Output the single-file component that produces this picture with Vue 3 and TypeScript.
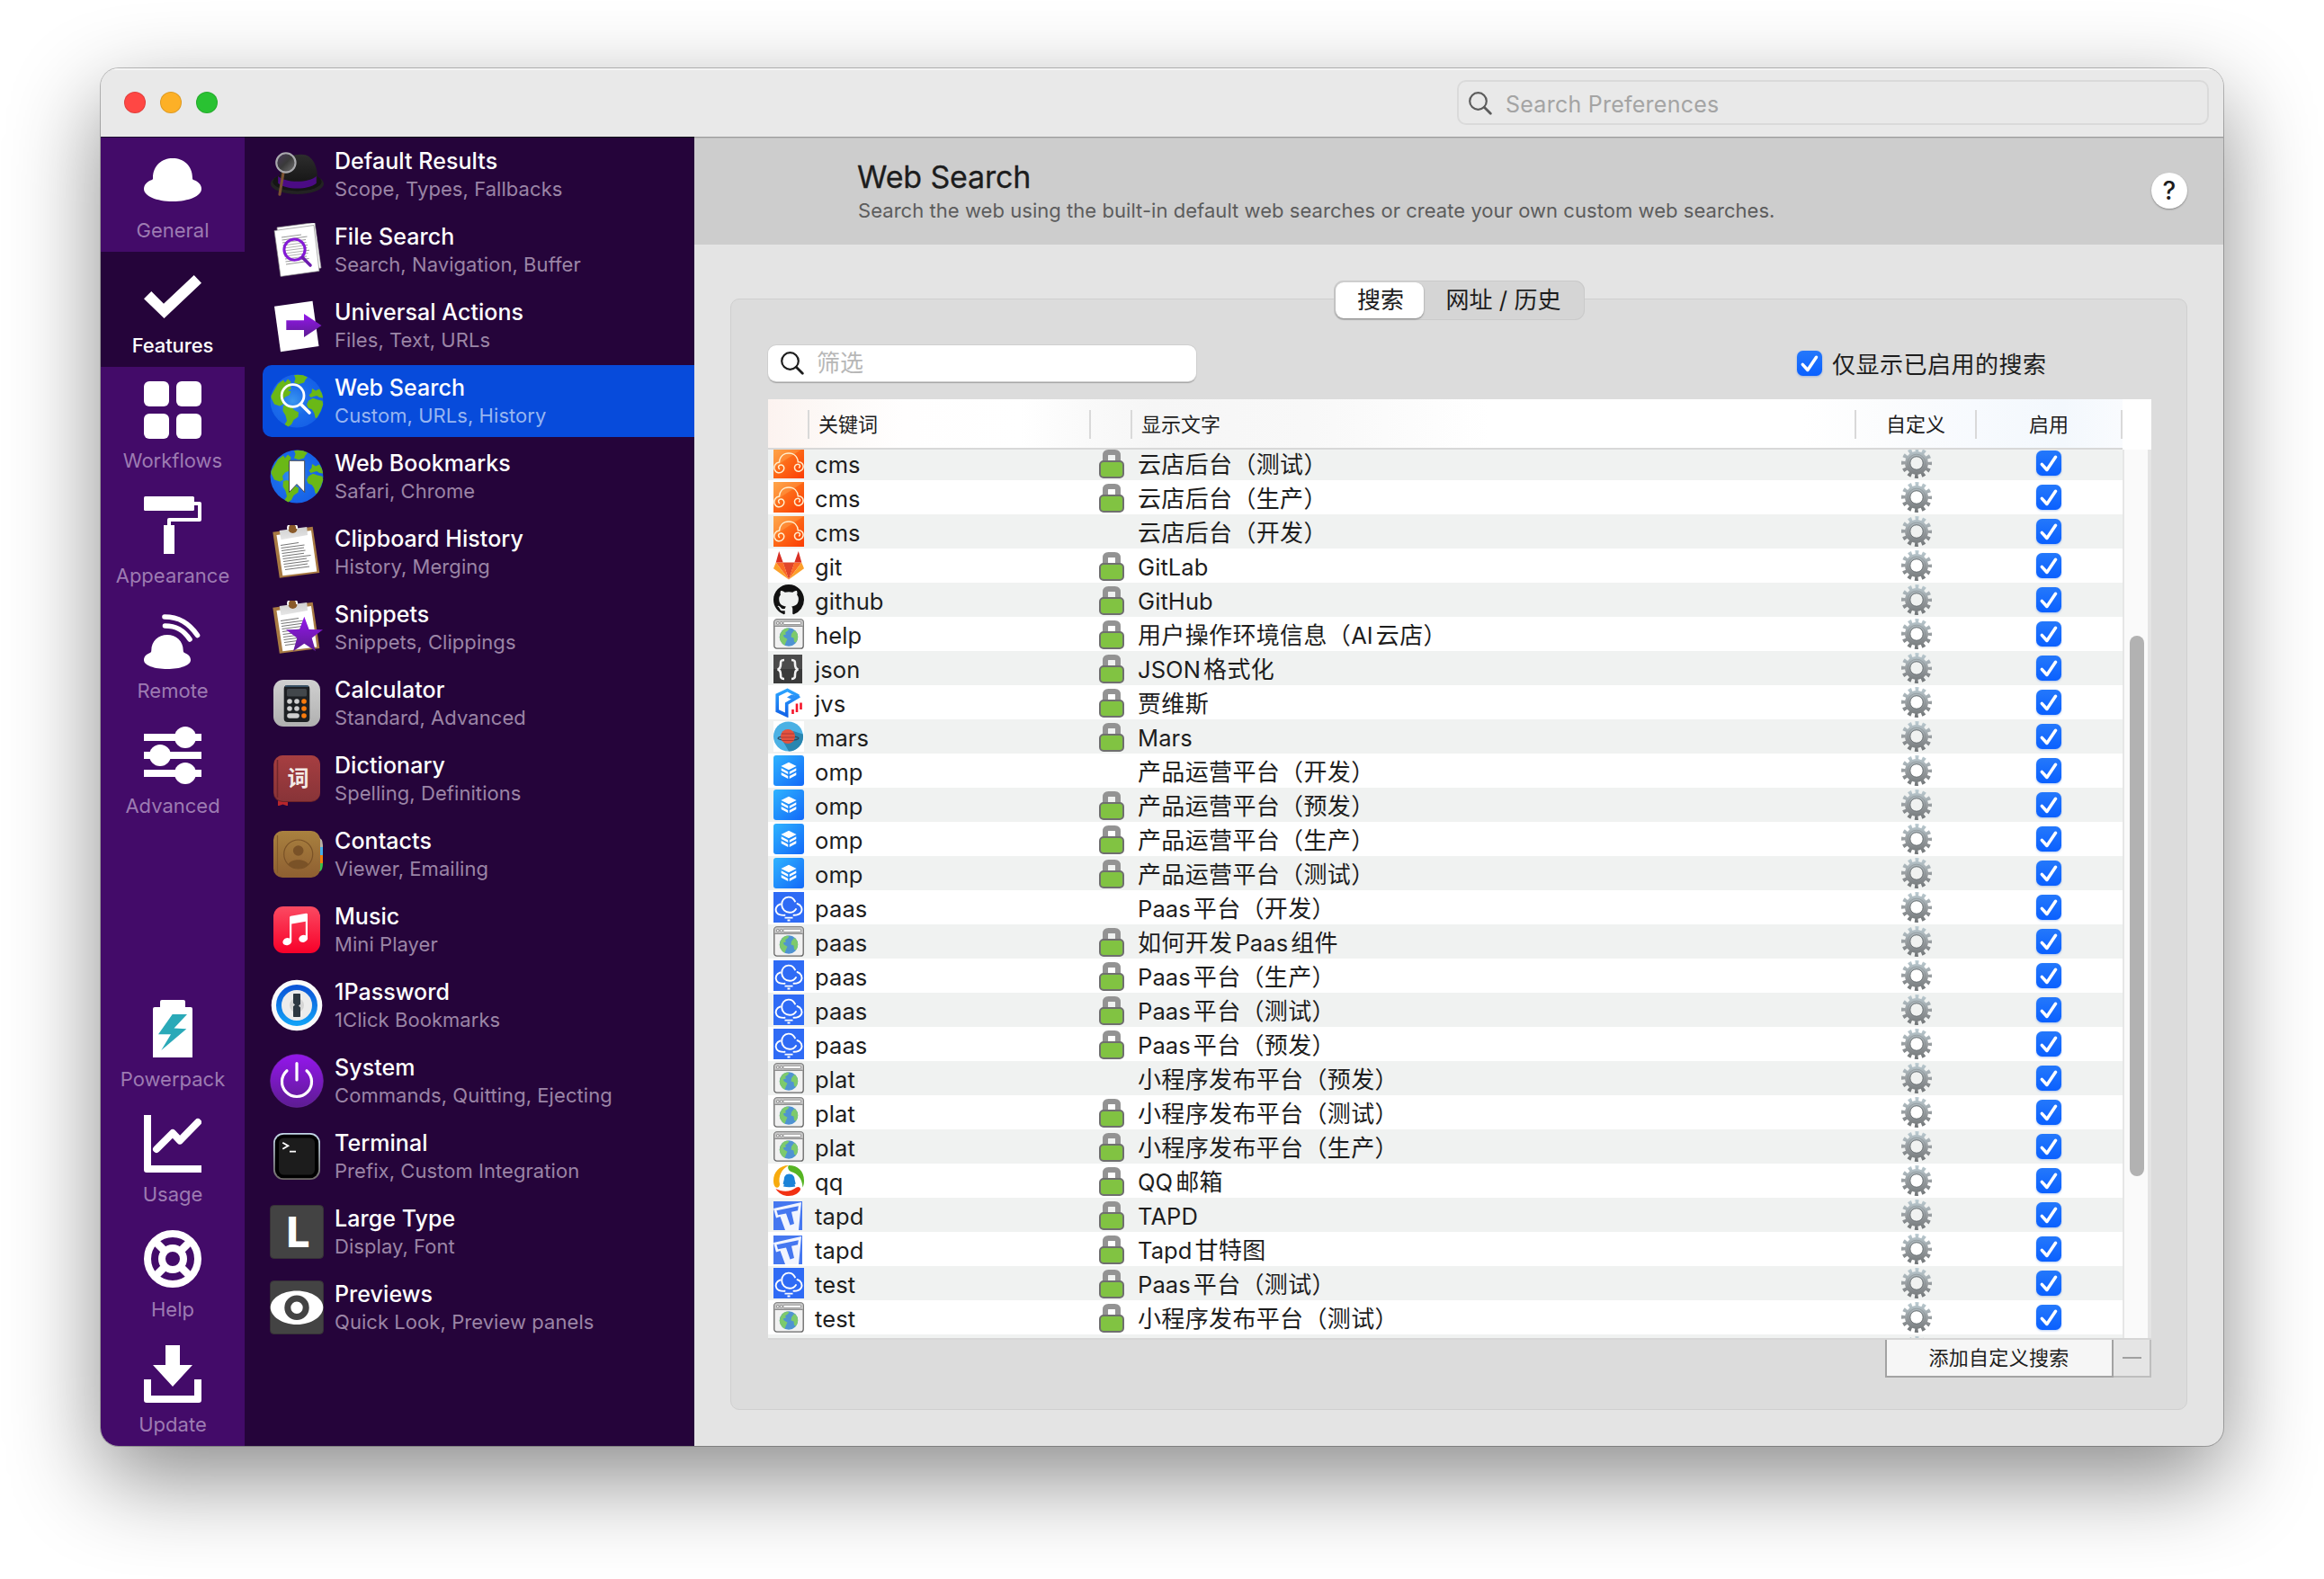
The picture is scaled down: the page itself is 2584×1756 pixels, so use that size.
<script setup lang="ts">
interface NavItem { id: string; label: string; active?: boolean }
interface Feature { id: string; title: string; sub: string; active?: boolean; glyph?: string }
interface Row { icon: string; keyword: string; label: string; locked: boolean }

const navTop: NavItem[] = [
  { id: 'general', label: 'General' },
  { id: 'features', label: 'Features', active: true },
  { id: 'workflows', label: 'Workflows' },
  { id: 'appearance', label: 'Appearance' },
  { id: 'remote', label: 'Remote' },
  { id: 'advanced', label: 'Advanced' },
]
const navBottom: NavItem[] = [
  { id: 'powerpack', label: 'Powerpack' },
  { id: 'usage', label: 'Usage' },
  { id: 'help', label: 'Help' },
  { id: 'update', label: 'Update' },
]
const features: Feature[] = [
  { id: 'results', title: 'Default Results', sub: 'Scope, Types, Fallbacks' },
  { id: 'file', title: 'File Search', sub: 'Search, Navigation, Buffer' },
  { id: 'actions', title: 'Universal Actions', sub: 'Files, Text, URLs' },
  { id: 'websearch', title: 'Web Search', sub: 'Custom, URLs, History', active: true },
  { id: 'bookmarks', title: 'Web Bookmarks', sub: 'Safari, Chrome' },
  { id: 'clipboard', title: 'Clipboard History', sub: 'History, Merging' },
  { id: 'snippets', title: 'Snippets', sub: 'Snippets, Clippings' },
  { id: 'calculator', title: 'Calculator', sub: 'Standard, Advanced' },
  { id: 'dictionary', title: 'Dictionary', sub: 'Spelling, Definitions', glyph: '词' },
  { id: 'contacts', title: 'Contacts', sub: 'Viewer, Emailing' },
  { id: 'music', title: 'Music', sub: 'Mini Player' },
  { id: 'onepassword', title: '1Password', sub: '1Click Bookmarks' },
  { id: 'system', title: 'System', sub: 'Commands, Quitting, Ejecting' },
  { id: 'terminal', title: 'Terminal', sub: 'Prefix, Custom Integration' },
  { id: 'largetype', title: 'Large Type', sub: 'Display, Font', glyph: 'L' },
  { id: 'previews', title: 'Previews', sub: 'Quick Look, Preview panels' },
]
const row = (icon: string, keyword: string, label: string, locked = true): Row => ({ icon, keyword, label, locked })
const rows: Row[] = [
  row('cms', 'cms', '云店后台（测试）'),
  row('cms', 'cms', '云店后台（生产）'),
  row('cms', 'cms', '云店后台（开发）', false),
  row('gitlab', 'git', 'GitLab'),
  row('github', 'github', 'GitHub'),
  row('browser', 'help', '用户操作环境信息（AI云店）'),
  row('json', 'json', 'JSON格式化'),
  row('jvs', 'jvs', '贾维斯'),
  row('mars', 'mars', 'Mars'),
  row('omp', 'omp', '产品运营平台（开发）', false),
  row('omp', 'omp', '产品运营平台（预发）'),
  row('omp', 'omp', '产品运营平台（生产）'),
  row('omp', 'omp', '产品运营平台（测试）'),
  row('paas', 'paas', 'Paas平台（开发）', false),
  row('browser', 'paas', '如何开发Paas组件'),
  row('paas', 'paas', 'Paas平台（生产）'),
  row('paas', 'paas', 'Paas平台（测试）'),
  row('paas', 'paas', 'Paas平台（预发）'),
  row('browser', 'plat', '小程序发布平台（预发）', false),
  row('browser', 'plat', '小程序发布平台（测试）'),
  row('browser', 'plat', '小程序发布平台（生产）'),
  row('qq', 'qq', 'QQ邮箱'),
  row('tapd', 'tapd', 'TAPD'),
  row('tapd', 'tapd', 'Tapd甘特图'),
  row('paas', 'test', 'Paas平台（测试）'),
  row('browser', 'test', '小程序发布平台（测试）'),
]

/* Splits a label into Latin and CJK runs so that the gap between scripts can be styled. */
const runs = (s: string) =>
  (s.match(/[\x20-\x7e]+|[^\x20-\x7e]+/g) ?? []).map((text, i, all) => ({
    text,
    cjk: !/[\x20-\x7e]/.test(text[0]),
    gap: i > 0 && !/[（）]$/.test(all[i - 1]) && !/^[（）]/.test(text),
  }))
</script>

<template>
  <svg class="defs" width="0" height="0" aria-hidden="true">
    <defs>
      <linearGradient id="gPurple" x1="0" y1="0" x2="0" y2="1"><stop offset="0" stop-color="#9416ec" /><stop offset="1" stop-color="#5d1c92" /></linearGradient>
      <radialGradient id="gSea" cx=".42" cy=".5" r=".6"><stop offset="0" stop-color="#3a97f0" /><stop offset=".5" stop-color="#1b6bea" /><stop offset="1" stop-color="#145fe6" /></radialGradient>
      <linearGradient id="gHat" x1="0" y1="0" x2="0" y2="1"><stop offset="0" stop-color="#2d2d2d" /><stop offset="1" stop-color="#121212" /></linearGradient>
      <linearGradient id="gLens" x1="0" y1="0" x2="1" y2="1"><stop offset="0" stop-color="#4a3a5c" /><stop offset=".5" stop-color="#3a3a3a" /><stop offset="1" stop-color="#777" /></linearGradient>
      <linearGradient id="gClip" x1="0" y1="0" x2="0" y2="1"><stop offset="0" stop-color="#cfcfcf" /><stop offset="1" stop-color="#e6e6e6" /></linearGradient>
      <linearGradient id="gCalc" x1="0" y1="0" x2="0" y2="1"><stop offset="0" stop-color="#d0d0d0" /><stop offset="1" stop-color="#b0b0b0" /></linearGradient>
      <linearGradient id="gBook" x1="0" y1="0" x2="0" y2="1"><stop offset="0" stop-color="#a63e41" /><stop offset="1" stop-color="#883438" /></linearGradient>
      <linearGradient id="gContact" x1="0" y1="0" x2="0" y2="1"><stop offset="0" stop-color="#a9813f" /><stop offset="1" stop-color="#8e5f31" /></linearGradient>
      <linearGradient id="gMusic" x1="0" y1="0" x2="0" y2="1"><stop offset="0" stop-color="#fb4a62" /><stop offset="1" stop-color="#f80029" /></linearGradient>
      <linearGradient id="gPass" x1="0" y1="0" x2="0" y2="1"><stop offset="0" stop-color="#0b56d8" /><stop offset="1" stop-color="#12a0f6" /></linearGradient>
      <linearGradient id="gTerm" x1="0" y1="0" x2="0" y2="1"><stop offset="0" stop-color="#c4d8ea" /><stop offset="1" stop-color="#6f6a68" /></linearGradient>
      <linearGradient id="gCms" x1="0" y1="0" x2="1" y2="1"><stop offset="0" stop-color="#ffa041" /><stop offset=".45" stop-color="#fd6a18" /><stop offset="1" stop-color="#fb3c04" /></linearGradient>
      <linearGradient id="gOmp" x1="0" y1="0" x2="1" y2="1"><stop offset="0" stop-color="#2fb4ff" /><stop offset="1" stop-color="#1268f8" /></linearGradient>
      <linearGradient id="gJvs" x1="0" y1="0" x2="0" y2="1"><stop offset="0" stop-color="#2aa4ff" /><stop offset="1" stop-color="#1263e8" /></linearGradient>
      <linearGradient id="gGear" gradientUnits="userSpaceOnUse" x1="0" y1="0" x2="0" y2="34"><stop offset="0" stop-color="#bccdd4" /><stop offset=".5" stop-color="#9a9fa2" /><stop offset="1" stop-color="#6f7375" /></linearGradient>
      <linearGradient id="gCheck" x1="0" y1="0" x2="0" y2="1"><stop offset="0" stop-color="#2478fb" /><stop offset="1" stop-color="#0a60ff" /></linearGradient>
    </defs>

    <symbol id="nav-general" viewBox="0 0 64 64"><path fill="#fff" d="M10 30C10 16 20 8 32 8s22 8 22 22c0 1 0 1.500 1 2 6 2 9 6 9 10 0 8-14 14-32 14S0 50 0 42c0-4 3-8 9-10 1-.5 1-1 1-2z" /></symbol>
    <symbol id="nav-features" viewBox="0 0 64 64"><path fill="#fff" d="M8.300 28 22 41.700 55.700 10l8.300 8.700L22.500 58 0 36.300z" /></symbol>
    <symbol id="nav-workflows" viewBox="0 0 64 64"><g fill="#fff"><rect width="28" height="28" rx="6" /><rect x="36" width="28" height="28" rx="6" /><rect y="36" width="28" height="28" rx="6" /><rect x="36" y="36" width="28" height="28" rx="6" /></g></symbol>
    <symbol id="nav-appearance" viewBox="0 0 64 64"><rect width="56" height="16" rx="1.500" fill="#fff" /><path d="M56 8h6v18H28v7" fill="none" stroke="#fff" stroke-width="4" stroke-linejoin="round" /><path fill="#fff" d="M22 32h12v32H22z" /></symbol>
    <symbol id="nav-remote" viewBox="0 0 64 64"><path fill="#fff" d="M8.300 43C8.300 33 16 26 26 26s17.700 7 17.700 17c0 1.500.3 2.500 1.500 3C49.500 47.500 52 50.500 52 54c0 6-11.600 10-26 10S0 60 0 54c0-3.500 2.500-6.500 6.800-8 1.200-.5 1.500-1.500 1.500-3z" /><g fill="none" stroke="#fff" stroke-width="5.600" stroke-linecap="round"><path d="M23 6c16 0 27 6.500 36.500 20.500" /><path d="M23.500 16C36 16 44 20.500 51 31" /></g></symbol>
    <symbol id="nav-advanced" viewBox="0 0 64 64"><g fill="#fff"><path d="M0 8h64v8H0zM0 28h64v8H0zM0 48h64v8H0z" /><circle cx="46" cy="12" r="12" /><circle cx="18" cy="32" r="12" /><circle cx="46" cy="52" r="12" /></g></symbol>
    <symbol id="nav-powerpack" viewBox="0 0 64 64"><path fill="#fff" d="M20 0h24q2 0 2 2v6h6q2 0 2 2v54H10V10q0-2 2-2h6V2q0-2 2-2z" /><path fill="#2aa9b8" d="M31.700 16H48L33.500 31.600l13.800.7L19.300 56 30 38.200H16z" /></symbol>
    <symbol id="nav-usage" viewBox="0 0 64 64"><path fill="#fff" d="M0 0h8v56h56v8H3q-3 0-3-3z" /><path d="m14 38 18-18 8 8.500L60 8" fill="none" stroke="#fff" stroke-width="8" stroke-linecap="round" stroke-linejoin="round" /></symbol>
    <symbol id="nav-help" viewBox="0 0 64 64"><g fill="none" stroke="#fff"><circle cx="32" cy="32" r="28" stroke-width="8" /><circle cx="32" cy="32" r="12" stroke-width="8" /><path stroke-width="8.500" d="m14 14 10 10M50 14 40 24M14 50l10-10M50 50 40 40" /></g></symbol>
    <symbol id="nav-update" viewBox="0 0 64 64"><g fill="#fff"><path d="M24 0h16v22h14L32 46 10 22h14z" /><path d="M0 38h8v18h48V38h8v23q0 3-3 3H3q-3 0-3-3z" /></g></symbol>

    <symbol id="globe" viewBox="0 0 60 60"><circle cx="30" cy="30" r="29.400" fill="url(#gSea)" /><g fill="#6ab816"><path d="M9 11 15 6.500l2 3 3-4 3.500 3-1 4 1.500 4-4 1.500 3.500 1.500-2 4-4.500 2-3 4 1 4-4 2-6-2-3.500-7L1.500 24z" /><path d="m27 1.300 4-.6 6 .6 5 2.200-2.500 3L38 9.500l-6 1.700-5-1.700 1.500-4.500z" /><path d="m15 35 4-1 5 2 3 4 5 2.500-.5 5-5 3.500-2.500 5-3.500 2.500-4-2.500 2.500-4-1.500-6-3-5z" /><path d="m43.500 23.500 3-3 .5-4.500 4 2.500 4-2 3 5 1.200 5-4-.5-3-2-3.500 1-3 1z" /><path d="m41 34 2-4.500 5-2.700 5 1.700 5.500 1.200.8 4-2.500 7-4 7.500-2 1-1.500-6-2.500-4-4-1.500z" /></g></symbol>
    <symbol id="board" viewBox="0 0 60 60"><path fill="#a87a43" d="m3.300 7.700 44.400-6 7.600 51.200-44.500 5.900z" /><path fill="#fff" d="m7.500 11 38.500-5 6.300 45.500-38 4.700z" /><g stroke="#777" stroke-width="1.100"><path d="m12 22.500 20-3M12.500 25.500l26-3.500M13 28.500l25-3.500M13.500 31.500l26-3.500M14 34.500l24-3.200M14.500 37.500l31-4M15 40.500l26-3.500M15.500 43.500l28-3.700M16 46.500l26-3.500M17 49.500l27-3.500" /></g><path fill="url(#gClip)" d="m10.700 6 30.500-4 .8 9-29.500 5.200z" /><circle cx="25.500" cy="4" r="5" fill="#8a5a2a" /><path d="M20.500 5a5 5 0 1 1 9.500-1" fill="none" stroke="#fff" stroke-width="2" /></symbol>

    <symbol id="f-results" viewBox="0 0 62 60"><ellipse cx="31.500" cy="40.500" rx="30.500" ry="12.200" fill="#232323" /><ellipse cx="31.500" cy="38.500" rx="28" ry="10.500" fill="#151515" /><path d="M11.500 40C11 20 16 7 36 7c14 0 19 14 19 31-6 9-35 11-43.500 2z" fill="url(#gHat)" /><path d="M9.500 32c8 8 36 8 44 0v8c-8 8-36 8-44 0z" fill="#4b0b84" /><path d="M15.500 28 11.300 53" stroke="#7a5232" stroke-width="3.200" stroke-linecap="round" /><circle cx="18.500" cy="16.500" r="11" fill="url(#gLens)" stroke="#a9a9ad" stroke-width="2.200" /></symbol>
    <symbol id="f-file" viewBox="0 0 60 60"><path fill="#fff" stroke="#999" stroke-width=".7" d="M8 5 50-.5l7 50.500-42 6.500z" /><path fill="#fff" stroke="#888" stroke-width=".7" d="m5 8.500 44-6 6 51-43 6z" /><g stroke="#999" stroke-width="1.100"><path d="m13 16 22-3M13.500 19l28-4M14 22l26-3.500M14.500 25l26-3.500M15 28l27-3.500M15.500 31l26-3.500M16 34l28-3.700M16.500 37l26-3.500M17 40l24-3M17.500 43l26-3.500M18 46l21-3" /></g><circle cx="27.500" cy="29.600" r="11.600" fill="#fff" fill-opacity=".25" stroke="#8419d6" stroke-width="3" /><path d="m36.500 38.500 8.500 8.500" stroke="#6d1cae" stroke-width="3.600" stroke-linecap="round" /></symbol>
    <symbol id="f-actions" viewBox="0 0 60 60"><path fill="#fff" d="m5 8.700 42.500-6 7 50.300-42.500 6.300z" /><path fill="url(#gPurple)" d="M18.300 24.300H38V17l19.500 13L38 43v-8H18.300z" /></symbol>
    <symbol id="f-websearch" viewBox="0 0 60 60"><use href="#globe" /><circle cx="25.600" cy="24" r="12.400" fill="none" stroke="#fff" stroke-width="2.800" /><path d="m34.500 33.500 9.500 9.500" stroke="#fff" stroke-width="3.600" stroke-linecap="round" /></symbol>
    <symbol id="f-bookmarks" viewBox="0 0 60 60"><use href="#globe" /><path d="M21.500 12.300h17.200v35.200L30 38.500l-8.500 9z" fill="#fff" stroke="#4a4a4a" /></symbol>
    <symbol id="f-clipboard" viewBox="0 0 60 60"><use href="#board" /></symbol>
    <symbol id="f-snippets" viewBox="0 0 60 60"><use href="#board" /><path fill="url(#gPurple)" d="m38.300 17.700 5.300 14.200 15.400.4-12.300 9.200 4.300 14.800-12.700-8.600L26 56.300l4.300-14.800L18 32.300l15-.4z" /></symbol>
    <symbol id="f-calculator" viewBox="0 0 60 60"><rect x="4" y="4" width="52" height="52" rx="11" fill="url(#gCalc)" /><rect x="15.700" y="10" width="28.600" height="41" rx="4" fill="#1d2023" /><path d="M17 11h26" stroke="#486a85" stroke-width="1.400" /><rect x="19" y="14" width="22" height="8.500" rx="1.500" fill="#42474b" /><g fill="#cfcfcf"><circle cx="22" cy="28" r="2.800" /><circle cx="30" cy="28" r="2.800" /><circle cx="22" cy="36" r="2.800" /><circle cx="30" cy="36" r="2.800" /><rect x="19.200" y="41.200" width="13.600" height="5.600" rx="2.800" /></g><g fill="#f97b0c"><circle cx="38" cy="28" r="2.800" /><circle cx="38" cy="36" r="2.800" /><circle cx="38" cy="44" r="2.800" /></g></symbol>
    <symbol id="f-dictionary" viewBox="0 0 60 60"><path fill="#b8262b" d="M9 54h11v6.500l-5.500-2-5.500 2z" /><rect x="4" y="4" width="52" height="52" rx="10" fill="#6d2328" /><rect x="4.500" y="4" width="51.500" height="51" rx="10" fill="url(#gBook)" /><path d="M8.500 9v42" stroke="#71262b" stroke-width="1.500" /></symbol>
    <symbol id="f-contacts" viewBox="0 0 60 60"><path fill="#b9b2a6" d="M52 10q7 2 7 10v2h-7z" /><path fill="#45aee8" d="M52 22h7v9h-7z" /><path fill="#ef7d0e" d="M52 31h7v9h-7z" /><path fill="#3cc14a" d="M52 40h7q0 7-3 9h-4z" /><rect x="4" y="4" width="52" height="52" rx="10" fill="url(#gContact)" /><path d="M8.500 9v42" stroke="#835a2b" stroke-width="1.200" /><g fill="#7a5227"><circle cx="31.700" cy="26" r="5.800" /><path d="M20.500 41c3-6.500 19-6.500 22.400 0-5.500 6.500-17 6.500-22.400 0z" /></g><circle cx="31.700" cy="30" r="16" fill="none" stroke="#7a5227" stroke-width="1.200" /></symbol>
    <symbol id="f-music" viewBox="0 0 60 60"><rect x="4" y="4" width="52" height="52" rx="11" fill="url(#gMusic)" /><g fill="#fff"><path d="M22 16.300q0-1.300 1.300-1.600l17-2.900q1.700-.3 1.700 1.300v27.400h-2.200V20.700L24.200 23.500V43H22z" /><ellipse cx="19.300" cy="43.200" rx="5" ry="4" transform="rotate(-15 19.300 43.200)" /><ellipse cx="37.200" cy="39.800" rx="5" ry="4" transform="rotate(-15 37.200 39.800)" /></g></symbol>
    <symbol id="f-onepassword" viewBox="0 0 60 60"><circle cx="30" cy="30" r="28.300" fill="#fafafa" /><circle cx="30" cy="30" r="20" fill="#ececec" stroke="url(#gPass)" stroke-width="6" /><circle cx="30" cy="30" r="8" fill="#d4d4d4" /><path fill="#2c3740" d="M26.700 17h6.600q.7 0 .7.7v11l-2 1.800 2 2v9.800q0 .7-.7.7h-6.600q-.7 0-.7-.7v-11l2-1.800-2-2v-9.800q0-.7.7-.7z" /></symbol>
    <symbol id="f-system" viewBox="0 0 60 60"><circle cx="30" cy="30" r="29.400" fill="url(#gPurple)" stroke="#6f2aa3" stroke-width=".6" /><path d="M19 18.700a16.500 16.500 0 1 0 22 0M30 10.500v18.500" fill="none" stroke="#fff" stroke-width="3.200" stroke-linecap="round" /></symbol>
    <symbol id="f-terminal" viewBox="0 0 60 60"><rect x="4" y="4" width="52" height="52" rx="11" fill="url(#gTerm)" /><rect x="5.800" y="5.800" width="48.400" height="48.400" rx="9.500" fill="#000" /><rect x="10" y="9.500" width="40" height="41" rx="5.500" fill="#1c1c1c" /><path d="m14.300 14.800 6 3.500-6 3.500M22 24.600h7" fill="none" stroke="#fff" stroke-width="1.900" /></symbol>
    <symbol id="f-largetype" viewBox="0 0 60 60"><rect x=".5" y=".5" width="59" height="59" rx="4" fill="#434343" stroke="#373237" /></symbol>
    <symbol id="f-previews" viewBox="0 0 60 60"><rect x=".5" y=".5" width="59" height="59" rx="4" fill="#434343" stroke="#373237" /><path fill="#fff" d="M.7 30C.7 20.500 13 11.500 30 11.500S59.300 20.500 59.300 30 47 49 30 49 .7 39.500.7 30z" /><circle cx="30" cy="30.200" r="10.200" fill="#fff" stroke="#434343" stroke-width="7" /></symbol>

    <symbol id="r-cms" viewBox="0 0 34 34"><path fill="url(#gCms)" d="M0 0h34v34H0z" /><path fill="#ffb25c" fill-opacity=".35" d="M0 0h34L0 22z" /><path d="M6.500 23.500C4.500 21.500 6 18.800 8.500 19c3.500.3 4.300 4.500 1.800 7C7.500 29 2.500 28.300 1.200 24 .3 20.500 2 16.500 6.500 16 7 10 11 6 17 6s9.800 4 10.300 9.800c4.200-.3 6.200 2.700 5.800 5.700-.6 4.500-6.500 6.300-8.800 3-1.800-2.800-.3-6.300 2.700-6.300 2.500 0 3.200 2.300 1.600 3.800" fill="none" stroke="#fff0d0" stroke-width="1.500" stroke-linecap="round" /></symbol>
    <symbol id="r-gitlab" viewBox="0 0 34 34"><path fill="#e0452b" d="M10.500 13.500h13L17 32.500z" /><path fill="#fb6b25" d="M2.700 13.500h8L17 32.500zM31.300 13.500h-8L17 32.500z" /><path fill="#fca02a" d="M2.700 13.500 0 20.200 17 32.500zM31.300 13.500l2.700 6.700-17 12.300z" /><path fill="#d93024" d="M6.200 1 2.700 13.500h8zM27.800 1l3.500 12.500h-8z" /></symbol>
    <symbol id="r-github" viewBox="0 0 16 16"><path fill="#111" d="M8 0C3.580 0 0 3.580 0 8c0 3.540 2.290 6.530 5.470 7.590.4.070.55-.17.55-.38 0-.19-.01-.82-.01-1.490-2.010.37-2.530-.49-2.690-.94-.09-.23-.48-.94-.82-1.130-.28-.15-.68-.52-.01-.53.63-.01 1.080.58 1.230.82.72 1.210 1.870.87 2.330.66.07-.52.28-.87.51-1.070-1.780-.2-3.640-.89-3.640-3.950 0-.87.31-1.590.82-2.150-.08-.2-.36-1.020.08-2.120 0 0 .67-.21 2.200.82.64-.18 1.320-.27 2-.27s1.360.09 2 .27c1.530-1.040 2.200-.82 2.200-.82.44 1.100.16 1.920.08 2.120.51.56.82 1.270.82 2.150 0 3.070-1.870 3.750-3.650 3.950.29.25.54.73.54 1.480 0 1.070-.01 1.930-.01 2.200 0 .21.15.46.55.38A8.010 8.010 0 0 0 16 8c0-4.420-3.580-8-8-8z" /></symbol>
    <symbol id="r-browser" viewBox="0 0 34 34"><rect x=".8" y=".8" width="32.400" height="32.400" rx="3" fill="#f1f1f1" stroke="#666" stroke-width="1.300" /><path d="M1.500 1.500h31v6.500h-31z" fill="#c9c9c9" /><path d="M1.500 8.300h31" stroke="#666" stroke-width=".9" /><circle cx="4.800" cy="4.900" r="1.500" fill="#eee" stroke="#777" stroke-width=".7" /><circle cx="8.700" cy="4.900" r="1.500" fill="#eee" stroke="#777" stroke-width=".7" /><rect x="11" y="3.300" width="19.500" height="3.200" rx=".8" fill="#fff" stroke="#777" stroke-width=".7" /><circle cx="17" cy="20.500" r="10.200" fill="#4f93d2" /><path fill="#7dca6c" d="m8 16 3-4 4-1.500 2.500.8-1.500 2-3 2.200 1 2-3 .8.500 2 4 2.500-1.500 3-1.500 4c-3.500-2-6-6-5.700-9.800zM20 17l3-4 2.500 1.800c2.500 3.500 2 9-.5 12l-2-1-.5-4.300-3-1z" /></symbol>
    <symbol id="r-json" viewBox="0 0 34 34"><path fill="#4b4b4b" d="M0 2h32v16H0z" /><path fill="#3a3a3a" d="M0 18h32v16H0z" /><path d="M12 8c-4 0-4 1.500-4 4.500S7.500 18 4.500 18.500C7.500 19 8 21 8 24s0 5 4 5M20 8c4 0 4 1.500 4 4.500s.5 5.500 3.500 6C24.500 19 24 21 24 24s0 5-4 5" fill="none" stroke="#f2f2f2" stroke-width="2.600" /></symbol>
    <symbol id="r-jvs" viewBox="0 0 34 34"><path d="m28 10-12.500-6.500L4.200 9v17.500l10.500 5V18.500L29 10" fill="none" stroke="url(#gJvs)" stroke-width="3.600" /><path d="m15 11.500 5-3 7 1.500-7 3.800z" fill="#2a8ff5" /><path d="M21.500 25v5M26 18.500v9.500M30.500 17.500V25" stroke="#f5152a" stroke-width="2.600" /></symbol>
    <symbol id="r-mars" viewBox="0 0 34 34"><path fill="#fff" d="M0 0h34v34H0z" /><circle cx="16.500" cy="17" r="16.500" fill="#4bb1e4" /><path fill="#2a86b0" d="m22 11 10.800 3.500C34.500 24 27 33.500 17 33.500L11 23z" /><ellipse cx="16.500" cy="19" rx="11.500" ry="2.400" fill="none" stroke="#31475a" stroke-width="1.200" /><circle cx="16" cy="17" r="8" fill="#e4533f" /><path d="M9 14h14M8.200 18h15.600M9.500 21.500h13" stroke="#a93a36" stroke-width="1.200" /></symbol>
    <symbol id="r-omp" viewBox="0 0 34 34"><rect width="34" height="34" rx="3" fill="url(#gOmp)" /><path fill="#fff" d="M17 7.700 25.600 12 17 16.300 8.400 12zM8.700 14.200l7.500 4v2.900l-7.500-4zM25.300 14.200l-7.500 4v2.900l7.500-4zM8.700 19l7.500 4v2.900l-7.500-4zM25.300 19l-7.500 4v2.900l7.500-4z" /></symbol>
    <symbol id="r-paas" viewBox="0 0 34 34"><path fill="#2f6bf5" d="M0 0h34v34H0z" /><g fill="none" stroke="#fff" stroke-width="1.900" stroke-linecap="round"><path d="M24 10.500C22 6.500 19 5.500 16.500 5.600c-4.500.2-7.500 4-7.300 8.600.2 5 4 8.600 8.800 8.600 3 0 5.500-1.300 7-3.800" /><path d="M7.500 13.500C3 15 1.500 19.500 3.500 22.700c1.800 2.800 5 3.300 9 3.100M26.500 13c4.500 1.500 6 6 4.300 9.200-1.500 2.800-4.300 3.600-8.300 3.600" /><path d="M12.500 28.700h9M15.500 31.500h3" stroke-width="1.800" stroke-linecap="butt" /></g></symbol>
    <symbol id="r-qq" viewBox="0 0 34 34"><path fill="#f7ab0e" d="M17 0C6 0 0 8 0 17c0 3 .5 5 2 7 2 1.500 5 .5 5-3C5 12 9 4 17 0z" /><path fill="#56b423" d="M17 0c10 0 17 6 17 17 0 3-.5 5-1.500 7.500C32 15 27 9 19.500 7 16 5.500 15.500 1.500 17 0z" /><path fill="#f23114" d="M2.500 26C6 31.500 11 34 17 34c6.500 0 11-3 13-7 .5-2.500-2.500-4-4.500-2.500C19 30 9 29.500 2.500 26z" /><path fill="#1c83d8" d="M17.500 9.500c4 0 6 3 6 6l1.200 5-1.200.8.800 2.200c-4 1-9.500 1-13.300 0l.8-2.200-1.200-.8 1.200-5c0-3 1.700-6 5.700-6z" /></symbol>
    <symbol id="r-tapd" viewBox="0 0 34 34"><path fill="#4577f0" d="M0 2h32v32H0z" /><path fill="#f2f5fe" d="M0 10 31 3l-3 31H13L7.500 19 3 20.500z" /><path fill="#4577f0" d="m3.500 12.300 24.300-5-.8 5-7 1.500L23 27l-4.500 1.500-4.500-13L5 17.300z" /></symbol>

    <symbol id="gear" viewBox="0 0 34 34"><circle cx="17" cy="17" r="14.300" fill="none" stroke="url(#gGear)" stroke-width="5.400" stroke-dasharray="3.744 3.744" stroke-dashoffset="1.870" /><circle cx="17" cy="17" r="9.900" fill="none" stroke="url(#gGear)" stroke-width="6" /><circle cx="17" cy="17" r="9.800" fill="none" stroke="#7f878b" stroke-opacity=".5" stroke-width="1" /><circle cx="17" cy="17" r="7.300" fill="none" stroke="#6f7679" stroke-width="1" /></symbol>
    <symbol id="lock" viewBox="0 0 28 32"><path d="M7 14V6.500Q7 3 10.500 3h7Q21 3 21 6.500V14" fill="none" stroke="#939393" stroke-width="6" /><rect x="1" y="13" width="26" height="18" rx="4" fill="#81c342" stroke="#6f6f6f" stroke-width="2" /></symbol>
    <symbol id="check" viewBox="0 0 28 28"><rect width="28" height="28" rx="6.500" fill="url(#gCheck)" /><path d="m6.300 15.300 5.600 6.200 9.600-14.200" fill="none" stroke="#fff" stroke-width="3.500" stroke-linecap="round" stroke-linejoin="round" /></symbol>
    <symbol id="loupe" viewBox="0 0 26 26"><circle cx="10.500" cy="10.500" r="9.300" fill="none" stroke="currentColor" stroke-width="2.200" /><path d="m17.300 17.300 7 7" stroke="currentColor" stroke-width="2.800" stroke-linecap="round" /></symbol>
  </svg>

  <main class="desktop">
    <div class="window">
      <header class="titlebar">
        <div class="lights"><i class="red"></i><i class="yellow"></i><i class="green"></i></div>
        <div class="prefs-search">
          <svg class="loupe"><use href="#loupe" /></svg>
          <span>Search Preferences</span>
        </div>
      </header>

      <div class="body">
        <nav class="nav">
          <div v-for="n in navTop" :key="n.id" class="nav-item" :class="{ active: n.active }">
            <svg><use :href="'#nav-' + n.id" /></svg>
            <span>{{ n.label }}</span>
          </div>
          <div class="spacer"></div>
          <div v-for="n in navBottom" :key="n.id" class="nav-item">
            <svg><use :href="'#nav-' + n.id" /></svg>
            <span>{{ n.label }}</span>
          </div>
        </nav>

        <aside class="features">
          <div v-for="f in features" :key="f.id" class="feature" :class="{ active: f.active }">
            <div class="ficon">
              <svg><use :href="'#f-' + f.id" /></svg>
              <em v-if="f.glyph" :class="'glyph-' + f.id">{{ f.glyph }}</em>
            </div>
            <div class="feature-text">
              <b>{{ f.title }}</b>
              <span>{{ f.sub }}</span>
            </div>
          </div>
        </aside>

        <section class="content">
          <header class="head">
            <div>
              <h1>Web Search</h1>
              <p>Search the web using the built-in default web searches or create your own custom web searches.</p>
            </div>
            <button class="help">?</button>
          </header>

          <div class="stage">
            <div class="panel">
              <div class="tabs"><span class="tab on">搜索</span><span class="tab">网址 / 历史</span></div>

              <div class="toolbar">
                <div class="filter">
                  <svg class="loupe"><use href="#loupe" /></svg>
                  <span>筛选</span>
                </div>
                <div class="only">
                  <svg class="check"><use href="#check" /></svg>
                  <span>仅显示已启用的搜索</span>
                </div>
              </div>

              <div class="table">
                <div class="thead">
                  <div class="cols">
                    <span></span><span>关键词</span><span></span><span>显示文字</span>
                    <span class="mid">自定义</span><span class="mid">启用</span>
                  </div>
                </div>
                <div class="tbody">
                  <div class="list">
                    <div v-for="(r, i) in rows" :key="i" class="row">
                      <svg class="ricon"><use :href="'#r-' + r.icon" /></svg>
                      <span class="kw">{{ r.keyword }}</span>
                      <svg v-if="r.locked" class="lock"><use href="#lock" /></svg>
                      <i v-else></i>
                      <span class="label"><span v-for="(p, k) in runs(r.label)" :key="k" :class="{ cjk: p.cjk, gap: p.gap }">{{ p.text }}</span></span>
                      <svg class="gear"><use href="#gear" /></svg>
                      <svg class="check"><use href="#check" /></svg>
                    </div>
                    <div class="row"><i></i><i></i><i></i><i></i><svg class="gear"><use href="#gear" /></svg></div>
                  </div>
                  <div class="track"><div class="thumb"></div></div>
                </div>
              </div>

              <div class="actions">
                <button class="add">添加自定义搜索</button>
                <button class="minus"><i></i></button>
              </div>
            </div>
          </div>
        </section>
      </div>
    </div>
  </main>
</template>

<style>
html, body { margin: 0; background: #fff; overflow: hidden; }
</style>

<style scoped>
* { box-sizing: border-box; }
.defs { position: absolute; }
.desktop {
  width: 2584px; height: 1756px; padding: 76px 112px 148px; background: #fff; overflow: hidden;
  font-family: Inter, "Noto Sans CJK SC", sans-serif; color: #1d1d1d;
}
.window {
  width: 2360px; height: 1532px; border-radius: 20px; overflow: hidden; display: flex; flex-direction: column;
  background: #e4e4e4;
  box-shadow: 0 0 0 1px rgba(0, 0, 0, .24), 0 36px 100px rgba(0, 0, 0, .46);
}
.titlebar {
  flex: none; height: 76px; background: #e9e9e9; display: flex; align-items: flex-start; justify-content: space-between;
  padding: 13px 16px 0 26px; box-shadow: inset 0 2px 0 #f5f5f5;
}
.lights { display: flex; gap: 16px; padding-top: 13px; }
.lights i { width: 24px; height: 24px; border-radius: 50%; border: 1px solid rgba(0, 0, 0, .12); }
.red { background: #ff4744; }
.yellow { background: #fdb026; }
.green { background: #29c232; }
.prefs-search {
  width: 836px; height: 50px; border: 2px solid #dadada; border-radius: 10px; display: flex; align-items: center;
  padding-left: 11px; color: #a4a4a4; font-size: 25px; letter-spacing: .25px;
}
.prefs-search .loupe { color: #5c5c5c; margin-right: 15px; margin-top: 1px; }
.loupe { width: 26px; height: 26px; flex: none; }
.prefs-search span { padding-top: 3px; }

.body { flex: 1; display: flex; min-height: 0; }
.nav { width: 160px; background: #430b69; display: flex; flex-direction: column; box-shadow: inset 0 1px 0 #1c0430; }
.nav-item { height: 128px; padding-top: 16px; display: flex; flex-direction: column; align-items: center; gap: 8px; color: #9d7bb2; }
.nav-item svg { width: 64px; height: 64px; }
.nav-item span { font-size: 22px; line-height: 32px; }
.nav-item.active { background: #25043a; color: #fff; }
.nav-item.active span { font-weight: 500; letter-spacing: -.1px; }
.spacer { flex: 1; }

.features { width: 500px; background: #25043a; padding: 2px 0 0 20px; display: flex; flex-direction: column; gap: 4px; box-shadow: inset 0 1px 0 #0d0116; }
.feature { height: 80px; padding-left: 8px; display: flex; align-items: center; border-radius: 10px 0 0 10px; }
.ficon { width: 60px; height: 60px; flex: none; position: relative; }
.ficon svg { width: 60px; height: 60px; display: block; overflow: visible; }
.ficon em {
  position: absolute; inset: 0; display: flex; align-items: center; justify-content: center;
  font-style: normal; line-height: 60px;
}
.glyph-dictionary { padding-left: 3px; font-size: 24px; font-weight: 600; color: #f3e9e6; }
.glyph-largetype { padding-left: 3px; font-size: 46px; font-weight: 800; color: #fff; }
.feature-text { align-self: flex-start; padding: 9px 0 0 12px; display: flex; flex-direction: column; gap: 1px; }
.feature b { font-size: 25px; line-height: 32px; font-weight: 500; letter-spacing: .06px; color: #fff; }
.feature span { font-size: 22px; line-height: 28px; letter-spacing: .06px; color: #9b85a6; }
.feature.active { background: #074bdb; }
.feature.active .feature-text span { color: #97b5f0; }

.content { flex: 1; display: flex; flex-direction: column; }
.head {
  height: 120px; background: #cdcdcd; padding: 23px 40px 0 181px; display: flex; justify-content: space-between;
  box-shadow: inset 0 1px 0 #9c9c9c, inset 0 2px 0 #bcbcbc;
}
h1 { margin: 0; font-size: 34px; line-height: 44px; font-weight: 400; letter-spacing: -.15px; -webkit-text-stroke: .3px currentColor; }
p { margin: 0; font-size: 22px; line-height: 30px; color: #5c5c5c; letter-spacing: .045px; padding-left: 1px; }
button { border: 0; padding: 0; font-family: inherit; color: inherit; }
.help {
  width: 40px; height: 40px; border-radius: 50%; margin-top: 17px; background: #fff; font-size: 28px; font-weight: 500; line-height: 40px;
  box-shadow: 0 1px 2px rgba(0, 0, 0, .35);
}
.stage { flex: 1; padding: 60px 40px 40px; display: flex; }
.panel {
  flex: 1; background: #dcdcdc; border: 1px solid #cfcfcf; border-radius: 10px; padding: 0 39px 0 41px;
  display: flex; flex-direction: column;
}
.tabs {
  align-self: flex-start; margin: -21px 0 0 629px; width: 279px; height: 44px; flex: none; border-radius: 11px; background: #d5d5d5;
  box-shadow: inset 0 0 0 1px #cacaca; display: flex; align-items: center; padding-left: 2px; font-size: 26px;
}
.tab { height: 40px; line-height: 40px; flex: 1; text-align: center; padding-right: 2px; }
.tab.on { flex: none; width: 98px; background: #fff; border-radius: 9px; box-shadow: 0 1px 2px rgba(0, 0, 0, .4); padding: 0 0 0 2px; }

.toolbar { margin-top: 28px; height: 40px; flex: none; display: flex; align-items: center; }
.filter {
  width: 476px; height: 40px; border-radius: 9px; background: #fff; display: flex; align-items: center; padding-left: 14px;
  color: #b7b7b7; font-size: 26px; box-shadow: 0 0 0 1px #cfcfcf, 0 2px 1px #a2a2a2;
}
.filter .loupe { color: #1d1d1d; margin-right: 14px; }
.filter span { line-height: 36px; }
.only { margin-left: 668px; display: flex; align-items: center; font-size: 26px; letter-spacing: .5px; white-space: nowrap; }
.only span { margin-left: 11px; line-height: 36px; padding-top: 3px; }
.check { width: 28px; height: 28px; filter: drop-shadow(0 1px 1px rgba(0, 80, 220, .3)); }

.table { margin-top: 20px; height: 1046px; flex: none; display: flex; flex-direction: column; border-bottom: 2px solid #d6d6d6; }
.thead { height: 56px; flex: none; background: #fff; display: flex; }
.cols {
  width: 1506px; height: 56px; border-bottom: 2px solid #d8d8d8; display: grid; align-items: start; padding-top: 12px;
  grid-template-columns: 46px 313px 46px 805px 134px 162px; font-size: 22px;
  background: linear-gradient(90deg, #fcf3f0 0, #fdfaf8 80px, #fffefe 150px, #fff 280px, #fafafa 350px, #f6f6f6 430px, #f8f8f8 600px, #fff 800px, #fff 1150px, #fbfcfd 1240px, #f7fafe 1340px, #f3f8fd 1440px, #f9fbfe 1506px);
}
.cols span { height: 32px; line-height: 32px; padding-left: 10px; border-right: 2px solid #d9d9d9; }
.cols .mid { padding: 0; text-align: center; }
.tbody { flex: 1; min-height: 0; display: flex; overflow: hidden; }
.list { width: 1506px; margin-top: -4px; flex: none; }
.row {
  height: 38px; display: grid; grid-template-columns: 52px 316px 43px 849px 150px auto; align-items: start;
  font-size: 25.500px; line-height: 38px; letter-spacing: .1px; background: #f0f2f1;
}
.row:nth-child(even) { background: #fff; }
.ricon { width: 34px; height: 34px; margin: 2px 0 0 6px; }
.kw, .label { padding-top: 2px; height: 38px; }
.label { white-space: nowrap; display: flex; }
.cjk { font-size: 26px; letter-spacing: .35px; }
.gap { margin-left: 3px; }
.lock { width: 28px; height: 32px; margin-top: 4px; }
.gear { width: 34px; height: 34px; margin-top: 2px; }
.row .check { margin-top: 5px; }
.track { flex: 1; background: #fafafa; border-left: 2px solid #e6e6e6; border-right: 4px solid #e4e4e4; padding: 207px 0 0 6px; }
.thumb { width: 16px; height: 601px; border-radius: 8px; background: #b2b2b2; }

.actions { display: flex; justify-content: flex-end; flex: none; height: 42px; }
.add { width: 254px; background: #f6f6f6; border: 2px solid #a3a3a3; border-top: 0; font-size: 22px; letter-spacing: .3px; line-height: 40px; padding-right: 1px; }
.minus { width: 42px; background: #e5e5e5; border: 2px solid #bebebe; border-width: 0 2px 2px 0; display: flex; align-items: center; justify-content: center; }
.minus i { width: 21px; height: 2px; background: #a0a0a0; }
</style>
